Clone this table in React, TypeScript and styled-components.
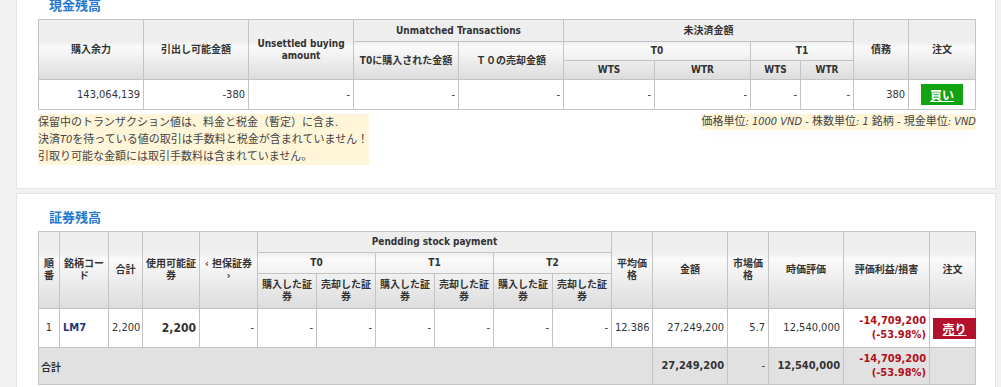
import React from "react";
import styled, { createGlobalStyle } from "styled-components";

const GlobalStyle = createGlobalStyle`
  html, body {
    margin: 0;
    padding: 0;
    background: #f1f1f1;
    overflow: hidden;
  }
  body {
    font-family: "DejaVu Sans Condensed", "Noto Sans CJK JP", sans-serif;
    color: #333;
  }
`;

const Page = styled.div`
  margin-top: -19px;
  padding-left: 16px;
  width: 980px;
`;

const Panel = styled.section`
  background: #fff;
  border: 1px solid #e4e4e4;
  padding: 14px 21px 23px 21px;
  margin-bottom: 4px;
`;

const Title = styled.h2`
  margin: 0 0 5px 11px;
  font-family: "Noto Sans CJK JP", sans-serif;
  font-size: 13px;
  line-height: 18px;
  font-weight: 700;
  color: #2178d2;
`;

const Grid = styled.table`
  width: 937px;
  border-collapse: collapse;
  table-layout: fixed;
  font-size: 11px;
  color: #333;
`;

const Head = styled.thead`
  background: linear-gradient(
    to bottom,
    #eeeeee 0px,
    #efefef 22px,
    #fafafa 27px,
    #dcdcdc 100%
  );
`;

const Row = styled.tr<{ $h: number; $total?: boolean }>`
  height: ${(p) => p.$h}px;
  background: ${(p) => (p.$total ? "#e1e1e1" : "transparent")};
`;

const Th = styled.th`
  border: 1px solid #c4c4c4;
  padding: 2px 3px;
  font-size: 10px;
  line-height: 12px;
  font-weight: 700;
  color: #333;
  text-align: center;
  vertical-align: middle;
`;

const Td = styled.td<{
  $align?: "left" | "right" | "center";
  $tone?: "code" | "loss";
  $strong?: boolean;
  $big?: boolean;
  $plain?: boolean;
}>`
  border: 1px solid #c4c4c4;
  padding: 2px 3px;
  text-align: ${(p) => p.$align ?? "right"};
  vertical-align: middle;
  white-space: nowrap;
  line-height: 14px;
  font-size: ${(p) => (p.$big ? "12px" : "11px")};
  font-weight: ${(p) => (p.$strong || p.$tone ? 700 : 400)};
  color: ${(p) =>
    p.$tone === "code" ? "#1b3679" : p.$tone === "loss" ? "#b0101c" : "#333"};
  background: ${(p) => (p.$plain ? "transparent" : "#fff")};
`;

const TotalLabel = styled.td`
  border: 1px solid #c4c4c4;
  padding: 2px 2px;
  text-align: left;
  vertical-align: middle;
  font-size: 10px;
  font-weight: 700;
  color: #333;
`;

const OrderButton = styled.a<{ $kind: "buy" | "sell" }>`
  display: inline-block;
  width: ${(p) => (p.$kind === "buy" ? 42 : 43)}px;
  height: 21px;
  line-height: 21px;
  text-align: center;
  background: ${(p) => (p.$kind === "buy" ? "#10a312" : "#b3112b")};
  color: #fff;
  font-family: "Noto Sans CJK JP", sans-serif;
  font-size: 12px;
  font-weight: 700;
  text-decoration: underline;
  cursor: pointer;
`;

const NotesBar = styled.div`
  display: flex;
  justify-content: space-between;
  align-items: flex-start;
  margin-top: 4px;
  width: 938px;
`;

const NoteBox = styled.div`
  background: #fff5d8;
  font-family: "DejaVu Sans Condensed", "Noto Sans CJK JP", sans-serif;
  font-size: 11px;
  line-height: 17px;
  color: #444;
  padding-right: 1px;
`;

const UnitNote = styled.div`
  background: #fff5d8;
  font-size: 11px;
  line-height: 16px;
  color: #444;
  box-shadow: 0 10px 10px -6px rgba(0, 0, 0, 0.035);
`;

const Val = styled.i`
  font-style: italic;
`;

const cashCols = [105, 105, 105, 105, 105, 91, 96, 50, 53, 55, 67];
const stockCols = [21, 49, 34, 57, 58, 59, 59, 59, 59, 59, 59, 41, 75, 41, 75, 86, 46];

const Cols = ({ widths }: { widths: number[] }) => (
  <colgroup>
    {widths.map((w, i) => (
      <col key={i} style={{ width: w }} />
    ))}
  </colgroup>
);

const pendingLegs = ["T0", "T1", "T2"];

export default function App() {
  return (
    <>
      <GlobalStyle />
      <Page>
        <Panel>
          <Title>現金残高</Title>
          <Grid>
            <Cols widths={cashCols} />
            <Head>
              <Row $h={22}>
                <Th rowSpan={3}>購入余力</Th>
                <Th rowSpan={3}>引出し可能金額</Th>
                <Th rowSpan={3}>
                  Unsettled buying
                  <br />
                  amount
                </Th>
                <Th colSpan={2}>Unmatched Transactions</Th>
                <Th colSpan={4}>未決済金額</Th>
                <Th rowSpan={3}>債務</Th>
                <Th rowSpan={3}>注文</Th>
              </Row>
              <Row $h={19}>
                <Th rowSpan={2}>T0に購入された金額</Th>
                <Th rowSpan={2}>Ｔ０の売却金額</Th>
                <Th colSpan={2}>T0</Th>
                <Th colSpan={2}>T1</Th>
              </Row>
              <Row $h={19}>
                <Th>WTS</Th>
                <Th>WTR</Th>
                <Th>WTS</Th>
                <Th>WTR</Th>
              </Row>
            </Head>
            <tbody>
              <Row $h={30}>
                <Td>143,064,139</Td>
                <Td>-380</Td>
                <Td>-</Td>
                <Td>-</Td>
                <Td>-</Td>
                <Td>-</Td>
                <Td>-</Td>
                <Td>-</Td>
                <Td>-</Td>
                <Td>380</Td>
                <Td $align="center">
                  <OrderButton $kind="buy">買い</OrderButton>
                </Td>
              </Row>
            </tbody>
          </Grid>
          <NotesBar>
            <NoteBox>
              保留中のトランザクション値は、料金と税金（暫定）に含ま.
              <br />
              決済<Val>T0</Val>を待っている値の取引は手数料と税金が含まれていません！
              <br />
              引取り可能な金額には取引手数料は含まれていません。
            </NoteBox>
            <UnitNote>
              価格単位<Val>: 1000 VND</Val> - 株数単位<Val>: 1</Val> 銘柄 - 現金単位
              <Val>: VND</Val>
            </UnitNote>
          </NotesBar>
        </Panel>

        <Panel>
          <Title>証券残高</Title>
          <Grid>
            <Cols widths={stockCols} />
            <Head>
              <Row $h={21}>
                <Th rowSpan={3}>
                  順<br />番
                </Th>
                <Th rowSpan={3}>
                  銘柄コー
                  <br />ド
                </Th>
                <Th rowSpan={3}>合計</Th>
                <Th rowSpan={3}>
                  使用可能証
                  <br />券
                </Th>
                <Th rowSpan={3}>
                  ‹ 担保証券
                  <br />›
                </Th>
                <Th colSpan={6}>Pendding stock payment</Th>
                <Th rowSpan={3}>
                  平均価
                  <br />格
                </Th>
                <Th rowSpan={3}>金額</Th>
                <Th rowSpan={3}>
                  市場価
                  <br />格
                </Th>
                <Th rowSpan={3}>時価評価</Th>
                <Th rowSpan={3}>評価利益/損害</Th>
                <Th rowSpan={3}>注文</Th>
              </Row>
              <Row $h={21}>
                {pendingLegs.map((leg) => (
                  <Th key={leg} colSpan={2}>
                    {leg}
                  </Th>
                ))}
              </Row>
              <Row $h={35}>
                {pendingLegs.map((leg) => (
                  <React.Fragment key={leg}>
                    <Th>
                      購入した証
                      <br />券
                    </Th>
                    <Th>
                      売却した証
                      <br />券
                    </Th>
                  </React.Fragment>
                ))}
              </Row>
            </Head>
            <tbody>
              <Row $h={39}>
                <Td $align="center">1</Td>
                <Td $align="left" $tone="code">
                  LM7
                </Td>
                <Td>2,200</Td>
                <Td $strong $big>
                  2,200
                </Td>
                <Td>-</Td>
                <Td>-</Td>
                <Td>-</Td>
                <Td>-</Td>
                <Td>-</Td>
                <Td>-</Td>
                <Td>-</Td>
                <Td>12.386</Td>
                <Td>27,249,200</Td>
                <Td>5.7</Td>
                <Td>12,540,000</Td>
                <Td $tone="loss">
                  -14,709,200
                  <br />
                  (-53.98%)
                </Td>
                <Td $align="center">
                  <OrderButton $kind="sell">売り</OrderButton>
                </Td>
              </Row>
              <Row $h={37} $total>
                <TotalLabel colSpan={12}>合計</TotalLabel>
                <Td $plain $strong>
                  27,249,200
                </Td>
                <Td $plain>-</Td>
                <Td $plain $strong>
                  12,540,000
                </Td>
                <Td $plain $tone="loss">
                  -14,709,200
                  <br />
                  (-53.98%)
                </Td>
                <Td $plain />
              </Row>
            </tbody>
          </Grid>
        </Panel>
      </Page>
    </>
  );
}
